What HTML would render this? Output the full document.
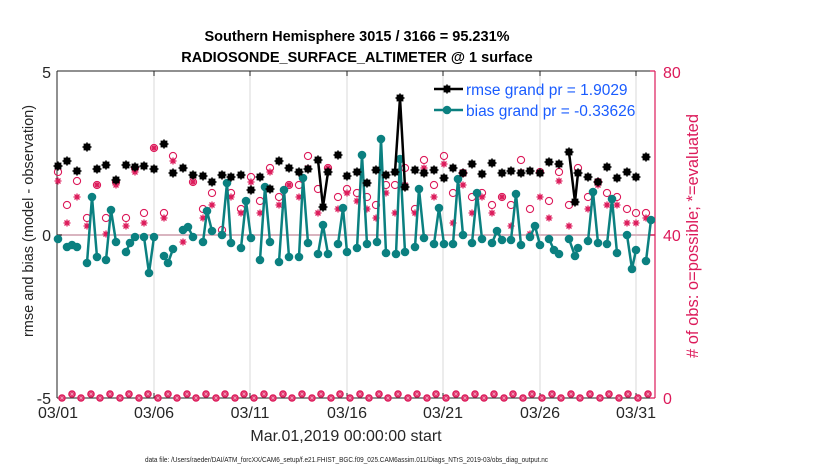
<!DOCTYPE html>
<html><head><meta charset="utf-8"><style>
html,body{margin:0;padding:0;background:#fff;width:830px;height:470px;overflow:hidden}
svg text{font-family:"Liberation Sans",sans-serif}
</style></head><body>
<svg width="830" height="470" viewBox="0 0 830 470" xmlns="http://www.w3.org/2000/svg">
<defs>
<g id="st" stroke="#dc1a5a" stroke-width="1.3"><path d="M-3.5 0H3.5M0 -3.5V3.5M-2.5 -2.5L2.5 2.5M-2.5 2.5L2.5 -2.5"/></g>
<circle id="ci" r="3.6" fill="none" stroke="#dc1a5a" stroke-width="1.1"/>
<g id="bk"><circle r="3.8" fill="#000"/><path d="M-4.6 0H4.6M0 -4.6V4.6M-3.3 -3.3L3.3 3.3M-3.3 3.3L3.3 -3.3" stroke="#000" stroke-width="1.3"/></g>
<circle id="tl" r="4.3" fill="#0b8080"/>
<g id="bm"><circle r="3.8" fill="#dc1a5a"/><path d="M-2.5 0H2.5M0 -2.5V2.5M-1.8 -1.8L1.8 1.8M-1.8 1.8L1.8 -1.8" stroke="#f6b8cc" stroke-width="0.5"/></g>
</defs>
<text x="357" y="41" font-size="14.5" font-weight="bold" text-anchor="middle">Southern Hemisphere 3015 / 3166 = 95.231%</text>
<text x="357" y="62" font-size="14.5" font-weight="bold" text-anchor="middle">RADIOSONDE_SURFACE_ALTIMETER @ 1 surface</text>
<g stroke="#d8d8d8" stroke-width="1">
<line x1="154" y1="72" x2="154" y2="398"/><line x1="250" y1="72" x2="250" y2="398"/><line x1="347" y1="72" x2="347" y2="398"/><line x1="443" y1="72" x2="443" y2="398"/><line x1="540" y1="72" x2="540" y2="398"/><line x1="636" y1="72" x2="636" y2="398"/>
</g>
<line x1="57" y1="235" x2="655" y2="235" stroke="#d9b5c0" stroke-width="2"/>
<g stroke="#222" stroke-width="1">
<line x1="57" y1="71" x2="655" y2="71"/><line x1="57" y1="398" x2="655" y2="398"/><line x1="57" y1="71" x2="57" y2="398"/>
<path d="M154 71v5M250 71v5M347 71v5M443 71v5M540 71v5M636 71v5M154 398v-5M250 398v-5M347 398v-5M443 398v-5M540 398v-5M636 398v-5M57 235h5"/>
</g>
<g stroke="#dc1a5a" stroke-width="1.2"><line x1="655" y1="71" x2="655" y2="398"/><path d="M655 71h-5M655 235h-5M655 398h-5"/></g>
<g font-size="16" fill="#262626">
<text x="51" y="78" text-anchor="end">5</text>
<text x="51" y="241" text-anchor="end">0</text>
<text x="51" y="404" text-anchor="end">-5</text>
<g text-anchor="middle"><text x="58" y="418">03/01</text><text x="154" y="418">03/06</text><text x="250" y="418">03/11</text><text x="347" y="418">03/16</text><text x="443" y="418">03/21</text><text x="540" y="418">03/26</text><text x="636" y="418">03/31</text></g>
<text x="346" y="441" text-anchor="middle">Mar.01,2019 00:00:00 start</text>
</g>
<g font-size="16" fill="#dc1a5a"><text x="663" y="78">80</text><text x="663" y="241">40</text><text x="663" y="404">0</text></g>
<text transform="translate(33,221) rotate(-90)" font-size="14.5" fill="#262626" text-anchor="middle">rmse and bias (model - observation)</text>
<text transform="translate(698,236) rotate(-90)" font-size="16.5" fill="#dc1a5a" text-anchor="middle"># of obs: o=possible; *=evaluated</text>
<text x="145" y="462" font-size="7.5" fill="#222" textLength="403" lengthAdjust="spacingAndGlyphs">data file: /Users/raeder/DAI/ATM_forcXX/CAM6_setup/f.e21.FHIST_BGC.f09_025.CAM6assim.011/Diags_NTrS_2019-03/obs_diag_output.nc</text>
<g>
<use href="#ci" x="58" y="172"/><use href="#ci" x="67" y="205"/><use href="#ci" x="77" y="181"/><use href="#ci" x="87" y="218"/><use href="#ci" x="97" y="185"/><use href="#ci" x="106" y="218"/><use href="#ci" x="116" y="182"/><use href="#ci" x="126" y="218"/><use href="#ci" x="135" y="168"/><use href="#ci" x="144" y="213"/><use href="#ci" x="154" y="148"/><use href="#ci" x="164" y="213"/><use href="#ci" x="173" y="156"/><use href="#ci" x="183" y="230"/><use href="#ci" x="193" y="182"/><use href="#ci" x="203" y="209"/><use href="#ci" x="212" y="193"/><use href="#ci" x="222" y="230"/><use href="#ci" x="231" y="193"/><use href="#ci" x="241" y="209"/><use href="#ci" x="251" y="177"/><use href="#ci" x="260" y="201"/><use href="#ci" x="270" y="168"/><use href="#ci" x="279" y="197"/><use href="#ci" x="289" y="185"/><use href="#ci" x="299" y="185"/><use href="#ci" x="308" y="156"/><use href="#ci" x="318" y="189"/><use href="#ci" x="328" y="168"/><use href="#ci" x="338" y="197"/><use href="#ci" x="347" y="189"/><use href="#ci" x="357" y="193"/><use href="#ci" x="367" y="197"/><use href="#ci" x="376" y="205"/><use href="#ci" x="386" y="185"/><use href="#ci" x="395" y="185"/><use href="#ci" x="405" y="168"/><use href="#ci" x="415" y="209"/><use href="#ci" x="424" y="160"/><use href="#ci" x="434" y="185"/><use href="#ci" x="444" y="156"/><use href="#ci" x="453" y="193"/><use href="#ci" x="463" y="173"/><use href="#ci" x="472" y="197"/><use href="#ci" x="482" y="193"/><use href="#ci" x="492" y="205"/><use href="#ci" x="502" y="197"/><use href="#ci" x="511" y="205"/><use href="#ci" x="521" y="160"/><use href="#ci" x="530" y="209"/><use href="#ci" x="540" y="172"/><use href="#ci" x="549" y="201"/><use href="#ci" x="559" y="172"/><use href="#ci" x="569" y="205"/><use href="#ci" x="578" y="168"/><use href="#ci" x="588" y="197"/><use href="#ci" x="598" y="182"/><use href="#ci" x="607" y="193"/><use href="#ci" x="617" y="197"/><use href="#ci" x="627" y="209"/><use href="#ci" x="636" y="213"/><use href="#ci" x="646" y="213"/>
</g>
<g>
<use href="#st" x="58" y="181"/><use href="#st" x="67" y="223"/><use href="#st" x="77" y="197"/><use href="#st" x="87" y="226"/><use href="#st" x="97" y="185"/><use href="#st" x="106" y="234"/><use href="#st" x="116" y="185"/><use href="#st" x="126" y="226"/><use href="#st" x="135" y="172"/><use href="#st" x="144" y="223"/><use href="#st" x="154" y="148"/><use href="#st" x="164" y="218"/><use href="#st" x="173" y="161"/><use href="#st" x="183" y="242"/><use href="#st" x="193" y="182"/><use href="#st" x="203" y="218"/><use href="#st" x="212" y="205"/><use href="#st" x="222" y="234"/><use href="#st" x="231" y="197"/><use href="#st" x="241" y="213"/><use href="#st" x="251" y="182"/><use href="#st" x="260" y="213"/><use href="#st" x="270" y="172"/><use href="#st" x="279" y="205"/><use href="#st" x="289" y="185"/><use href="#st" x="299" y="197"/><use href="#st" x="308" y="168"/><use href="#st" x="318" y="213"/><use href="#st" x="328" y="168"/><use href="#st" x="338" y="209"/><use href="#st" x="347" y="193"/><use href="#st" x="357" y="201"/><use href="#st" x="367" y="209"/><use href="#st" x="376" y="218"/><use href="#st" x="386" y="193"/><use href="#st" x="395" y="213"/><use href="#st" x="405" y="185"/><use href="#st" x="415" y="213"/><use href="#st" x="424" y="168"/><use href="#st" x="434" y="197"/><use href="#st" x="444" y="164"/><use href="#st" x="453" y="223"/><use href="#st" x="463" y="185"/><use href="#st" x="472" y="213"/><use href="#st" x="482" y="197"/><use href="#st" x="492" y="213"/><use href="#st" x="502" y="197"/><use href="#st" x="511" y="226"/><use href="#st" x="521" y="172"/><use href="#st" x="530" y="234"/><use href="#st" x="540" y="197"/><use href="#st" x="549" y="218"/><use href="#st" x="559" y="181"/><use href="#st" x="569" y="226"/><use href="#st" x="578" y="172"/><use href="#st" x="588" y="209"/><use href="#st" x="598" y="185"/><use href="#st" x="607" y="205"/><use href="#st" x="617" y="205"/><use href="#st" x="627" y="223"/><use href="#st" x="636" y="223"/><use href="#st" x="646" y="218"/>
</g>
<g>
<use href="#bm" x="62" y="398"/><use href="#bm" x="72" y="394"/><use href="#bm" x="81" y="398"/><use href="#bm" x="91" y="394"/><use href="#bm" x="100" y="398"/><use href="#bm" x="110" y="394"/><use href="#bm" x="120" y="398"/><use href="#bm" x="129" y="394"/><use href="#bm" x="139" y="398"/><use href="#bm" x="148" y="394"/><use href="#bm" x="158" y="398"/><use href="#bm" x="168" y="394"/><use href="#bm" x="177" y="398"/><use href="#bm" x="187" y="394"/><use href="#bm" x="196" y="398"/><use href="#bm" x="206" y="394"/><use href="#bm" x="216" y="398"/><use href="#bm" x="225" y="394"/><use href="#bm" x="235" y="398"/><use href="#bm" x="244" y="394"/><use href="#bm" x="254" y="398"/><use href="#bm" x="264" y="394"/><use href="#bm" x="273" y="398"/><use href="#bm" x="283" y="394"/><use href="#bm" x="292" y="398"/><use href="#bm" x="302" y="394"/><use href="#bm" x="312" y="398"/><use href="#bm" x="321" y="394"/><use href="#bm" x="331" y="398"/><use href="#bm" x="340" y="394"/><use href="#bm" x="350" y="398"/><use href="#bm" x="360" y="394"/><use href="#bm" x="369" y="398"/><use href="#bm" x="379" y="394"/><use href="#bm" x="388" y="398"/><use href="#bm" x="398" y="394"/><use href="#bm" x="408" y="398"/><use href="#bm" x="417" y="394"/><use href="#bm" x="427" y="398"/><use href="#bm" x="436" y="394"/><use href="#bm" x="446" y="398"/><use href="#bm" x="456" y="394"/><use href="#bm" x="465" y="398"/><use href="#bm" x="475" y="394"/><use href="#bm" x="484" y="398"/><use href="#bm" x="494" y="394"/><use href="#bm" x="504" y="398"/><use href="#bm" x="513" y="394"/><use href="#bm" x="523" y="398"/><use href="#bm" x="532" y="394"/><use href="#bm" x="542" y="398"/><use href="#bm" x="552" y="394"/><use href="#bm" x="561" y="398"/><use href="#bm" x="571" y="394"/><use href="#bm" x="580" y="398"/><use href="#bm" x="590" y="394"/><use href="#bm" x="600" y="398"/><use href="#bm" x="609" y="394"/><use href="#bm" x="619" y="398"/><use href="#bm" x="628" y="394"/><use href="#bm" x="638" y="398"/><use href="#bm" x="648" y="394"/>
</g>
<g fill="none" stroke="#0b8080" stroke-width="2.5" stroke-linejoin="round">
<polyline points="67,247 72,245 77,247"/><polyline points="87,263 92,197 97,257"/><polyline points="106,260 111,210 116,242"/><polyline points="126,252 130,243 135,237"/><polyline points="144,237 149,273 154,237"/><polyline points="164,256 168,263 173,249"/><polyline points="183,230 188,227 193,237"/><polyline points="203,242 207,211 212,231"/><polyline points="222,235 227,183 231,243"/><polyline points="241,248 246,201 251,238"/><polyline points="260,260 265,187 270,242"/><polyline points="279,262 284,190 289,257"/><polyline points="299,257 303,178 308,243"/><polyline points="318,254 323,225 328,254"/><polyline points="338,244 343,208 347,252"/><polyline points="357,248 362,155 367,244"/><polyline points="377,242 381,139 386,253"/><polyline points="396,254 400,159 405,252"/><polyline points="415,247 419,189 424,238"/><polyline points="434,244 439,208 444,244"/><polyline points="453,244 458,179 463,235"/><polyline points="472,243 477,193 482,239"/><polyline points="492,243 497,231 502,240"/><polyline points="511,240 516,194 521,245"/><polyline points="530,237 535,226 540,245"/><polyline points="549,239 554,250 559,254"/><polyline points="569,239 575,256 578,248"/><polyline points="588,241 593,192 598,243"/><polyline points="607,244 612,199 617,253"/><polyline points="627,235 632,269 636,250"/><polyline points="646,261 651,220"/>
</g>
<g>
<use href="#tl" x="58" y="239"/><use href="#tl" x="67" y="247"/><use href="#tl" x="72" y="245"/><use href="#tl" x="77" y="247"/><use href="#tl" x="87" y="263"/><use href="#tl" x="92" y="197"/><use href="#tl" x="97" y="257"/><use href="#tl" x="106" y="260"/><use href="#tl" x="111" y="210"/><use href="#tl" x="116" y="242"/><use href="#tl" x="126" y="252"/><use href="#tl" x="130" y="243"/><use href="#tl" x="135" y="237"/><use href="#tl" x="144" y="237"/><use href="#tl" x="149" y="273"/><use href="#tl" x="154" y="237"/><use href="#tl" x="164" y="256"/><use href="#tl" x="168" y="263"/><use href="#tl" x="173" y="249"/><use href="#tl" x="183" y="230"/><use href="#tl" x="188" y="227"/><use href="#tl" x="193" y="237"/><use href="#tl" x="203" y="242"/><use href="#tl" x="207" y="211"/><use href="#tl" x="212" y="231"/><use href="#tl" x="222" y="235"/><use href="#tl" x="227" y="183"/><use href="#tl" x="231" y="243"/><use href="#tl" x="241" y="248"/><use href="#tl" x="246" y="201"/><use href="#tl" x="251" y="238"/><use href="#tl" x="260" y="260"/><use href="#tl" x="265" y="187"/><use href="#tl" x="270" y="242"/><use href="#tl" x="279" y="262"/><use href="#tl" x="284" y="190"/><use href="#tl" x="289" y="257"/><use href="#tl" x="299" y="257"/><use href="#tl" x="303" y="178"/><use href="#tl" x="308" y="243"/><use href="#tl" x="318" y="254"/><use href="#tl" x="323" y="225"/><use href="#tl" x="328" y="254"/><use href="#tl" x="338" y="244"/><use href="#tl" x="343" y="208"/><use href="#tl" x="347" y="252"/><use href="#tl" x="357" y="248"/><use href="#tl" x="362" y="155"/><use href="#tl" x="367" y="244"/><use href="#tl" x="377" y="242"/><use href="#tl" x="381" y="139"/><use href="#tl" x="386" y="253"/><use href="#tl" x="396" y="254"/><use href="#tl" x="400" y="159"/><use href="#tl" x="405" y="252"/><use href="#tl" x="415" y="247"/><use href="#tl" x="419" y="189"/><use href="#tl" x="424" y="238"/><use href="#tl" x="434" y="244"/><use href="#tl" x="439" y="208"/><use href="#tl" x="444" y="244"/><use href="#tl" x="453" y="244"/><use href="#tl" x="458" y="179"/><use href="#tl" x="463" y="235"/><use href="#tl" x="472" y="243"/><use href="#tl" x="477" y="193"/><use href="#tl" x="482" y="239"/><use href="#tl" x="492" y="243"/><use href="#tl" x="497" y="231"/><use href="#tl" x="502" y="240"/><use href="#tl" x="511" y="240"/><use href="#tl" x="516" y="194"/><use href="#tl" x="521" y="245"/><use href="#tl" x="530" y="237"/><use href="#tl" x="535" y="226"/><use href="#tl" x="540" y="245"/><use href="#tl" x="549" y="239"/><use href="#tl" x="554" y="250"/><use href="#tl" x="559" y="254"/><use href="#tl" x="569" y="239"/><use href="#tl" x="575" y="256"/><use href="#tl" x="578" y="248"/><use href="#tl" x="588" y="241"/><use href="#tl" x="593" y="192"/><use href="#tl" x="598" y="243"/><use href="#tl" x="607" y="244"/><use href="#tl" x="612" y="199"/><use href="#tl" x="617" y="253"/><use href="#tl" x="627" y="235"/><use href="#tl" x="632" y="269"/><use href="#tl" x="636" y="250"/><use href="#tl" x="646" y="261"/><use href="#tl" x="651" y="220"/>
</g>
<g fill="none" stroke="#000" stroke-width="2.5"><polyline points="318,160 323,207 328,172"/><polyline points="395,172 400,98 405,187"/><polyline points="569,152 575,202 578,173"/></g>
<g>
<use href="#bk" x="58" y="166"/><use href="#bk" x="67" y="161"/><use href="#bk" x="77" y="171"/><use href="#bk" x="87" y="147"/><use href="#bk" x="97" y="169"/><use href="#bk" x="106" y="165"/><use href="#bk" x="116" y="180"/><use href="#bk" x="126" y="165"/><use href="#bk" x="135" y="167"/><use href="#bk" x="144" y="166"/><use href="#bk" x="154" y="169"/><use href="#bk" x="164" y="144"/><use href="#bk" x="173" y="173"/><use href="#bk" x="183" y="168"/><use href="#bk" x="193" y="175"/><use href="#bk" x="203" y="176"/><use href="#bk" x="212" y="182"/><use href="#bk" x="222" y="175"/><use href="#bk" x="231" y="177"/><use href="#bk" x="241" y="175"/><use href="#bk" x="251" y="190"/><use href="#bk" x="260" y="177"/><use href="#bk" x="270" y="189"/><use href="#bk" x="279" y="161"/><use href="#bk" x="289" y="168"/><use href="#bk" x="299" y="172"/><use href="#bk" x="308" y="169"/><use href="#bk" x="318" y="160"/><use href="#bk" x="323" y="207"/><use href="#bk" x="328" y="172"/><use href="#bk" x="338" y="155"/><use href="#bk" x="347" y="176"/><use href="#bk" x="357" y="172"/><use href="#bk" x="367" y="183"/><use href="#bk" x="376" y="170"/><use href="#bk" x="386" y="175"/><use href="#bk" x="395" y="172"/><use href="#bk" x="400" y="98"/><use href="#bk" x="405" y="187"/><use href="#bk" x="415" y="170"/><use href="#bk" x="424" y="173"/><use href="#bk" x="434" y="170"/><use href="#bk" x="444" y="178"/><use href="#bk" x="453" y="168"/><use href="#bk" x="463" y="173"/><use href="#bk" x="472" y="164"/><use href="#bk" x="482" y="174"/><use href="#bk" x="492" y="163"/><use href="#bk" x="502" y="173"/><use href="#bk" x="511" y="171"/><use href="#bk" x="521" y="173"/><use href="#bk" x="530" y="171"/><use href="#bk" x="540" y="173"/><use href="#bk" x="549" y="162"/><use href="#bk" x="559" y="164"/><use href="#bk" x="569" y="152"/><use href="#bk" x="575" y="202"/><use href="#bk" x="578" y="173"/><use href="#bk" x="588" y="177"/><use href="#bk" x="598" y="182"/><use href="#bk" x="607" y="167"/><use href="#bk" x="617" y="178"/><use href="#bk" x="627" y="172"/><use href="#bk" x="636" y="177"/><use href="#bk" x="646" y="157"/>
</g>
<line x1="434" y1="89" x2="463" y2="89" stroke="#000" stroke-width="2.5"/><use href="#bk" x="447" y="89"/>
<line x1="434" y1="110" x2="463" y2="110" stroke="#0b8080" stroke-width="2.5"/><use href="#tl" x="447" y="110"/>
<text x="466" y="95" font-size="15.5" fill="#1a5cff">rmse grand pr = 1.9029</text>
<text x="466" y="116" font-size="15.5" fill="#1a5cff">bias grand pr = -0.33626</text>
</svg>
</body></html>
